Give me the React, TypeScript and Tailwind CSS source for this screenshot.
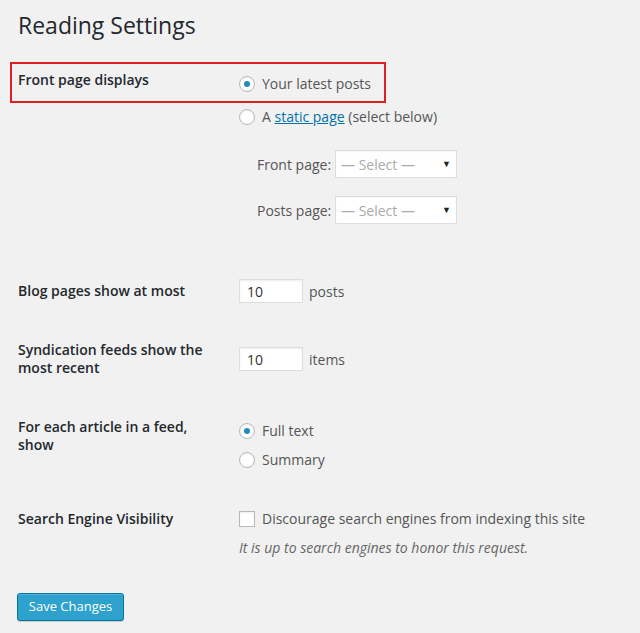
import React from "react";

function Radio({ checked }: { checked?: boolean }) {
  return (
    <span className="mr-[7px] flex h-4 w-4 shrink-0 items-center justify-center rounded-full border border-[#b4b9be] bg-white shadow-[inset_0_1px_2px_rgba(0,0,0,0.07)]">
      {checked && <span className="h-[6px] w-[6px] rounded-full bg-[#1e8cbe]" />}
    </span>
  );
}

function SelectBox() {
  return (
    <div className="flex h-[28px] w-[122px] items-center justify-between border border-[#ddd] bg-white pl-[5px] pr-[5px] text-[14px] text-[#aaa] shadow-[inset_0_1px_2px_rgba(0,0,0,0.04)]">
      <span>— Select —</span>
      <span className="text-[9px] text-[#222]">▼</span>
    </div>
  );
}

function NumInput() {
  return (
    <div className="flex h-[24px] w-[64px] items-center border border-[#ddd] bg-white pl-[7px] text-[14px] text-[#333] shadow-[inset_0_1px_2px_rgba(0,0,0,0.07)]">
      10
    </div>
  );
}

export default function App() {
  return (
    <div
      className="min-h-[633px] w-[640px] bg-[#f1f1f1] pl-[18px] text-[14px] text-[#555]"
      style={{ fontFamily: '"Open Sans", sans-serif' }}
    >
      <h1 className="pt-[11px] text-[23px] leading-[29px] font-normal text-[#23282d]">
        Reading Settings
      </h1>

      {/* front page displays */}
      <div className="relative mt-[30px] flex">
        <div className="absolute -top-[8px] -left-[8px] h-[41px] w-[376px] border-2 border-[#dc2020]" />
        <div className="w-[221px] leading-[20px] font-semibold text-[#23282d]">
          Front page displays
        </div>
        <div className="pt-[4px]">
          <div className="flex items-center leading-[20px]">
            <Radio checked />
            Your latest posts
          </div>
          <div className="mt-[13px] flex items-center leading-[20px]">
            <Radio />
            A&nbsp;<span className="text-[#0073aa] underline">static page</span>&nbsp;(select below)
          </div>
          <div className="mt-[23px] flex items-center pl-[18px]">
            <span className="w-[78px]">Front page:</span>
            <SelectBox />
          </div>
          <div className="mt-[18px] flex items-center pl-[18px]">
            <span className="w-[78px]">Posts page:</span>
            <SelectBox />
          </div>
        </div>
      </div>

      {/* blog pages */}
      <div className="mt-[55px] flex">
        <div className="w-[221px] leading-[24px] font-semibold text-[#23282d]">
          Blog pages show at most
        </div>
        <div className="flex items-center gap-[6px]">
          <NumInput />
          <span>posts</span>
        </div>
      </div>

      {/* syndication */}
      <div className="mt-[38px] flex">
        <div className="w-[221px] pr-[10px] leading-[18px] font-semibold text-[#23282d]">
          Syndication feeds show the most recent
        </div>
        <div className="flex items-center gap-[6px] self-start pt-[6px]">
          <NumInput />
          <span>items</span>
        </div>
      </div>

      {/* article in feed */}
      <div className="mt-[41px] flex">
        <div className="w-[221px] pr-[24px] leading-[18px] font-semibold text-[#23282d]">
          For each article in a feed, show
        </div>
        <div className="pt-[3px]">
          <div className="flex items-center leading-[20px]">
            <Radio checked />
            Full text
          </div>
          <div className="mt-[9px] flex items-center leading-[20px]">
            <Radio />
            Summary
          </div>
        </div>
      </div>

      {/* search engine */}
      <div className="mt-[39px] flex">
        <div className="w-[221px] leading-[20px] font-semibold text-[#23282d]">
          Search Engine Visibility
        </div>
        <div>
          <div className="flex items-center leading-[20px]">
            <span className="mr-[7px] h-4 w-4 shrink-0 border border-[#b4b9be] bg-white shadow-[inset_0_1px_2px_rgba(0,0,0,0.07)]" />
            Discourage search engines from indexing this site
          </div>
          <p className="mt-[9px] leading-[20px] text-[#666] italic">
            It is up to search engines to honor this request.
          </p>
        </div>
      </div>

      <button className="mt-[35px] -ml-px h-[28px] w-[107px] rounded-[3px] border border-[#0074a2] bg-[#2ea2cc] text-[13px] text-white shadow-[inset_0_1px_0_rgba(120,200,230,0.5),0_1px_0_rgba(0,0,0,0.15)]">
        Save Changes
      </button>
    </div>
  );
}
